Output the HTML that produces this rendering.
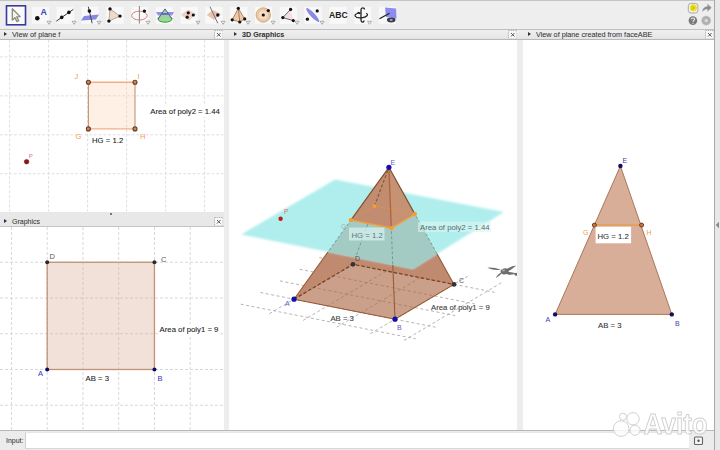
<!DOCTYPE html>
<html><head><meta charset="utf-8">
<style>
*{margin:0;padding:0;box-sizing:border-box}
html,body{width:720px;height:450px;overflow:hidden;background:#ececec;font-family:"Liberation Sans",sans-serif}
.abs{position:absolute}
#tb{left:0;top:0;width:720px;height:29px;background:#eeeeee;border-top:1px solid #c4c4c4}
.hdr{position:absolute;height:11px;background:linear-gradient(#f2f2f2,#e2e2e2);border-top:1px solid #c2c2c2;border-bottom:1px solid #b8b8b8;font-size:7.4px;color:#333}
.hdr .t{position:absolute;top:0px;line-height:9px;-webkit-text-stroke:0.05px #333}
.hdr .tri{position:absolute;top:2px;width:0;height:0;border-left:3px solid #333;border-top:2.5px solid transparent;border-bottom:2.5px solid transparent}
.cls{position:absolute;top:0px;width:9px;height:9px;border:1px solid #b8b8b8;background:#f8f8f8;font-size:8px;line-height:7px;text-align:center;color:#444}
.pane{position:absolute;background:#fff;overflow:hidden}
</style></head><body>
<div id="tb" class="abs"></div>
<svg class="abs" style="left:0;top:0" width="720" height="29" viewBox="0 0 720 29"><rect x="7.14" y="6.8" width="17.2" height="17" fill="#f8f8f8"/><rect x="31.92" y="6.8" width="17.2" height="17" fill="#f8f8f8"/><rect x="56.70" y="6.8" width="17.2" height="17" fill="#f8f8f8"/><rect x="81.48" y="6.8" width="17.2" height="17" fill="#f8f8f8"/><rect x="106.26" y="6.8" width="17.2" height="17" fill="#f8f8f8"/><rect x="131.04" y="6.8" width="17.2" height="17" fill="#f8f8f8"/><rect x="155.82" y="6.8" width="17.2" height="17" fill="#f8f8f8"/><rect x="180.60" y="6.8" width="17.2" height="17" fill="#f8f8f8"/><rect x="205.38" y="6.8" width="17.2" height="17" fill="#f8f8f8"/><rect x="230.16" y="6.8" width="17.2" height="17" fill="#f8f8f8"/><rect x="254.94" y="6.8" width="17.2" height="17" fill="#f8f8f8"/><rect x="279.72" y="6.8" width="17.2" height="17" fill="#f8f8f8"/><rect x="304.50" y="6.8" width="17.2" height="17" fill="#f8f8f8"/><rect x="329.28" y="6.8" width="17.2" height="17" fill="#f8f8f8"/><rect x="354.06" y="6.8" width="17.2" height="17" fill="#f8f8f8"/><rect x="378.84" y="6.8" width="17.2" height="17" fill="#f8f8f8"/><rect x="6.5" y="5.8" width="19" height="19" fill="#fbfbfb" stroke="#3a3a9a" stroke-width="1.6"/><path d="M12.3,8.8 L12.3,20.2 L14.9,17.6 L16.9,21.6 L18.7,20.7 L16.7,16.9 L20.2,16.6 Z" fill="#f4f4ee" stroke="#8c8c7c" stroke-width="1.3" stroke-linejoin="round"/><circle cx="37.3" cy="18.3" r="2.3" fill="#111"/><text x="40.4" y="15.2" font-size="8.8" font-weight="bold" fill="#4040b8">A</text><path d="M47,21.3 L51,21.3 L49,24.3 Z" fill="#fff" stroke="#999" stroke-width="0.8"/><line x1="56.4" y1="21.1" x2="73.3" y2="9.4" stroke="#333" stroke-width="1"/><circle cx="61.7" cy="17.4" r="1.8" fill="#111"/><circle cx="68.9" cy="12.4" r="1.8" fill="#111"/><path d="M72,21.3 L76,21.3 L74,24.3 Z" fill="#fff" stroke="#999" stroke-width="0.8"/><path d="M81,20.5 L84,16 L99,14.5 L96,19.5 Z" fill="#8888e0"/><line x1="88.3" y1="6.7" x2="92.2" y2="23.3" stroke="#444" stroke-width="1"/><circle cx="89.4" cy="11.1" r="1.8" fill="#111"/><path d="M97,21.3 L101,21.3 L99,24.3 Z" fill="#fff" stroke="#999" stroke-width="0.8"/><path d="M110,8.9 L120,16.1 L108.9,21.1 Z" fill="#f2d8c6" stroke="#999" stroke-width="0.8"/><circle cx="110" cy="8.9" r="1.7" fill="#111"/><circle cx="120" cy="16.1" r="1.7" fill="#111"/><circle cx="108.9" cy="21.1" r="1.7" fill="#111"/><line x1="139.4" y1="6" x2="139.4" y2="23.5" stroke="#777" stroke-width="0.9"/><ellipse cx="139.4" cy="15.6" rx="7.8" ry="4.4" fill="none" stroke="#d88080" stroke-width="1"/><circle cx="144.4" cy="11.1" r="1.7" fill="#111"/><path d="M146,21.3 L150,21.3 L148,24.3 Z" fill="#fff" stroke="#999" stroke-width="0.8"/><path d="M156,12 L174,12 L172,15.5 L158,15.5 Z" fill="#8888dd" opacity="0.9"/><ellipse cx="165" cy="19" rx="7" ry="3.2" fill="#90e090" stroke="#3a9a3a" stroke-width="1"/><path d="M158,19 L165,8.9 L172,19" fill="#a0d0a0" stroke="#3a3a9a" stroke-width="0.8"/><path d="M161.5,14 L168.5,14" stroke="#5555cc" stroke-width="1.5"/><path d="M181,15 L188,9.6 L196,14 L189,20.5 Z" fill="#ecd0c4"/><circle cx="188.3" cy="12.8" r="1.6" fill="#111"/><circle cx="193.3" cy="15" r="1.6" fill="#111"/><circle cx="187.2" cy="17.2" r="1.6" fill="#111"/><path d="M196,21.3 L200,21.3 L198,24.3 Z" fill="#fff" stroke="#999" stroke-width="0.8"/><path d="M206.7,15 L213,10 L221,14 L214,20 Z" fill="#e8c4b0"/><line x1="210" y1="6.7" x2="217.8" y2="23.3" stroke="#666" stroke-width="0.9"/><circle cx="217.8" cy="15" r="1.7" fill="#111"/><path d="M221,21.3 L225,21.3 L223,24.3 Z" fill="#fff" stroke="#999" stroke-width="0.8"/><path d="M238.3,8.3 L232.2,19.8 L239.8,22 L244.7,18.9 Z" fill="#f0c8a8" stroke="#8a6040" stroke-width="0.7"/><line x1="238.3" y1="8.3" x2="239.8" y2="22" stroke="#8a6040" stroke-width="0.7"/><circle cx="238.3" cy="8.3" r="1.6" fill="#111"/><circle cx="232.2" cy="19.8" r="1.6" fill="#111"/><circle cx="239.8" cy="22" r="1.6" fill="#111"/><circle cx="244.7" cy="18.9" r="1.6" fill="#111"/><path d="M246,21.3 L250,21.3 L248,24.3 Z" fill="#fff" stroke="#999" stroke-width="0.8"/><circle cx="263.3" cy="15" r="7.2" fill="#ecc8a0" stroke="#c8a070" stroke-width="0.8"/><circle cx="263.3" cy="15" r="4.5" fill="#f4dcc8"/><circle cx="263.3" cy="15" r="1.6" fill="#111"/><circle cx="268.3" cy="10.6" r="1.6" fill="#111"/><path d="M271,21.3 L275,21.3 L273,24.3 Z" fill="#fff" stroke="#999" stroke-width="0.8"/><path d="M290.6,9.4 L282.8,17.6 L293.3,20.6" fill="#f8e0e0" stroke="#444" stroke-width="0.8"/><circle cx="290.6" cy="9.4" r="1.6" fill="#111"/><circle cx="282.8" cy="17.6" r="1.6" fill="#111"/><circle cx="293.3" cy="20.6" r="1.6" fill="#111"/><path d="M295,21.3 L299,21.3 L297,24.3 Z" fill="#fff" stroke="#999" stroke-width="0.8"/><ellipse cx="312.7" cy="15" rx="9.3" ry="2.2" transform="rotate(47 312.7 15)" fill="#8a8ae4"/><circle cx="317.2" cy="10.9" r="1.6" fill="#111"/><circle cx="307.4" cy="19.2" r="1.6" fill="#111"/><path d="M320,21.3 L324,21.3 L322,24.3 Z" fill="#fff" stroke="#999" stroke-width="0.8"/><text x="329" y="18.3" font-size="8.6" font-weight="bold" fill="#222">ABC</text><path d="M364.5,9.5 C364.5,7.2 361,7.2 361,9.8 L361,20 C361,22.8 364,22.5 364,20.5" fill="none" stroke="#222" stroke-width="1.3"/><path d="M359,13 C352,14.5 355,18.5 361.5,17.8 C367,17.2 369,14.5 366.2,13.2" fill="none" stroke="#222" stroke-width="1.2"/><path d="M357.5,12.6 L360.5,13.4" stroke="#222" stroke-width="1.8"/><path d="M367.5,21.3 L371.5,21.3 L369.5,24.3 Z" fill="#fff" stroke="#999" stroke-width="0.8"/><path d="M385,7.6 L396,8.5 L396.5,18.5 L386,17 Z" fill="#8c8cf0"/><line x1="379.5" y1="18.8" x2="389.5" y2="13.3" stroke="#222" stroke-width="1.3"/><ellipse cx="391.2" cy="20" rx="4.3" ry="2.4" fill="#3a3a4a"/><ellipse cx="391.2" cy="20" rx="1.6" ry="1" fill="#aaa"/><rect x="688.3" y="3.4" width="9.6" height="9.6" rx="2.5" fill="#f2f2ea" stroke="#a4a4a0" stroke-width="0.9"/><circle cx="693.4" cy="7.8" r="3.5" fill="#ece020"/><path d="M691.5,6.5 L694.8,7.8 L691.5,9.3" fill="none" stroke="#c4b400" stroke-width="0.9"/>
<path d="M702.5,11.5 C702.5,8 705,6.6 707.5,6.6 L707.5,4 L711.5,7.8 L707.5,11.5 L707.5,9 C705.5,9 704,10 702.5,11.5 Z" fill="#8a8a8a" stroke="#bbb" stroke-width="0.5"/>
<circle cx="692.9" cy="20.6" r="4.3" fill="#7a7a7a"/><path d="M691.3,19.3 C691.3,17.6 694.6,17.6 694.6,19.3 C694.6,20.5 693,20.6 693,21.8" fill="none" stroke="#eee" stroke-width="1.1"/><circle cx="693" cy="23.3" r="0.6" fill="#eee"/>
<circle cx="706.2" cy="20.6" r="4.6" fill="#b0b0b0" stroke="#c8c8c8" stroke-width="1" stroke-dasharray="1.2,1"/><circle cx="706.2" cy="20.6" r="1.7" fill="#dcdcdc"/>
</svg>
<div class="abs" style="left:0;top:29px;width:713.5px;height:11px;background:linear-gradient(#f0f0f0,#e4e4e4);border-top:1px solid #c0c0c0;border-bottom:1px solid #b8b8b8"></div>
<div class="abs" style="left:223.5px;top:40px;width:5.5px;height:389.7px;background:#ededed"></div>
<div class="abs" style="left:517px;top:40px;width:6px;height:389.7px;background:#ededed"></div>
<div class="abs" style="left:713.5px;top:0px;width:6.5px;height:450px;background:#e8e8e8;border-left:1px solid #a8a8a8"></div>

<div class="hdr" style="left:0px;top:29px;width:223.5px;background:none;border-bottom-color:transparent;border-top-color:transparent"><div class="tri" style="left:4px"></div><div class="t" style="left:12px;font-size:7.4px;">View of plane f</div><svg class="abs" style="left:213.5px;top:0px" width="9.5" height="9.5"><rect x="0.5" y="0.5" width="8.5" height="8.5" fill="#f8f8f8" stroke="#b8b8b8" stroke-dasharray="1.5,0.7"/><path d="M3,3 L6.5,6.5 M6.5,3 L3,6.5" stroke="#555" stroke-width="1"/></svg></div>
<div class="pane" style="left:0;top:40px;width:223.5px;height:171.5px"></div>
<div class="abs" style="left:0;top:211.5px;width:223.5px;height:15.5px;background:#e8e8e8;border-bottom:1.5px solid #c4c4c4"></div>
<div class="abs" style="left:110px;top:213px;width:2px;height:2px;background:#777"></div>
<div class="hdr" style="left:0px;top:215.5px;width:223.5px;background:none;border-bottom-color:transparent;border-top-color:transparent"><div class="tri" style="left:4px"></div><div class="t" style="left:12px;font-size:7.0px;">Graphics</div><svg class="abs" style="left:213.5px;top:0px" width="9.5" height="9.5"><rect x="0.5" y="0.5" width="8.5" height="8.5" fill="#f8f8f8" stroke="#b8b8b8" stroke-dasharray="1.5,0.7"/><path d="M3,3 L6.5,6.5 M6.5,3 L3,6.5" stroke="#555" stroke-width="1"/></svg></div>
<div class="pane" style="left:0;top:227px;width:223.5px;height:202.7px"></div>
<div class="hdr" style="left:229px;top:29px;width:288px;background:none;border-bottom-color:transparent;border-top-color:transparent"><div class="tri" style="left:5px"></div><div class="t" style="left:13px;font-size:7.2px;font-weight:bold;">3D Graphics</div><svg class="abs" style="left:278.5px;top:0px" width="9.5" height="9.5"><rect x="0.5" y="0.5" width="8.5" height="8.5" fill="#f8f8f8" stroke="#b8b8b8" stroke-dasharray="1.5,0.7"/><path d="M3,3 L6.5,6.5 M6.5,3 L3,6.5" stroke="#555" stroke-width="1"/></svg></div>
<div class="pane" style="left:229px;top:40px;width:288px;height:389.7px"></div>
<div class="hdr" style="left:523px;top:29px;width:190.5px;background:none;border-bottom-color:transparent;border-top-color:transparent"><div class="tri" style="left:5px"></div><div class="t" style="left:13px;font-size:7.25px;">View of plane created from faceABE</div><svg class="abs" style="left:181.70000000000005px;top:0px" width="9.5" height="9.5"><rect x="0.5" y="0.5" width="8.5" height="8.5" fill="#f8f8f8" stroke="#b8b8b8" stroke-dasharray="1.5,0.7"/><path d="M3,3 L6.5,6.5 M6.5,3 L3,6.5" stroke="#555" stroke-width="1"/></svg></div>
<div class="pane" style="left:523px;top:40px;width:190.5px;height:389.7px"></div>

<svg class="abs" style="left:0;top:0" width="720" height="450" viewBox="0 0 720 450">
<defs>
<clipPath id="c1"><rect x="0" y="40" width="223.5" height="171.5"/></clipPath>
<clipPath id="c2"><rect x="0" y="227" width="223.5" height="202.7"/></clipPath>
<clipPath id="c3"><rect x="229" y="40" width="288" height="389.7"/></clipPath>
<clipPath id="c4"><rect x="523" y="40" width="190.5" height="389.7"/></clipPath>
<clipPath id="pl"><polygon points="241.0,234.5 335.0,179.6 504.0,212.0 413.0,269.0"/></clipPath>
<clipPath id="nopl"><path clip-rule="evenodd" d="M0,0 H720 V450 H0 Z M241,234.5 L335,179.6 L504,212 L413,269 Z"/></clipPath>
<filter id="soft" x="-5%" y="-5%" width="110%" height="110%"><feGaussianBlur stdDeviation="1.1"/></filter>
<filter id="soft2" x="-5%" y="-5%" width="110%" height="110%"><feGaussianBlur stdDeviation="0.5"/></filter>
<clipPath id="basecl"><polygon points="294.0,299.2 395.0,319.2 454.0,284.4 353.0,264.3"/></clipPath>
</defs>
<g clip-path="url(#c1)">
<g stroke="#dedede" stroke-width="1" stroke-dasharray="2.8,1.9"><line x1="9.60" y1="40" x2="9.60" y2="212"/><line x1="48.60" y1="40" x2="48.60" y2="212"/><line x1="87.60" y1="40" x2="87.60" y2="212"/><line x1="126.60" y1="40" x2="126.60" y2="212"/><line x1="165.60" y1="40" x2="165.60" y2="212"/><line x1="204.60" y1="40" x2="204.60" y2="212"/><line x1="0" y1="56.90" x2="224" y2="56.90"/><line x1="0" y1="95.85" x2="224" y2="95.85"/><line x1="0" y1="134.80" x2="224" y2="134.80"/><line x1="0" y1="173.75" x2="224" y2="173.75"/><line x1="0" y1="212.70" x2="224" y2="212.70"/></g>
<rect x="88.4" y="82.3" width="46.6" height="46.6" fill="#fbd4b4" fill-opacity="0.35"/><g stroke-width="1.4"><line x1="88.4" y1="82.3" x2="135" y2="82.3" stroke="#f6ac88"/><line x1="88.4" y1="128.9" x2="135" y2="128.9" stroke="#f6ac88"/></g><g stroke-width="1.1" stroke="#c09478"><line x1="88.4" y1="82.3" x2="88.4" y2="128.9"/><line x1="135" y1="82.3" x2="135" y2="128.9"/></g>
<g fill="#c88a60" stroke="#6a3a1a" stroke-width="1.1">
<circle cx="88.4" cy="82.3" r="2"/><circle cx="135" cy="82.3" r="2"/><circle cx="88.4" cy="128.9" r="2"/><circle cx="135" cy="128.9" r="2"/>
</g>
<circle cx="26.6" cy="161.7" r="2.3" fill="#8a1818" stroke="#5a0a0a" stroke-width="0.5"/>
<g font-size="7.5" fill="#f0a050"><text x="74.5" y="79">J</text><text x="137.5" y="79">I</text><text x="75.5" y="138.5">G</text><text x="140" y="138.5">H</text></g>
<text x="28.8" y="157.8" font-size="6" fill="#d87080">P</text>
<rect x="149" y="105.5" width="72" height="11.5" fill="#fff"/><g font-size="7.75" fill="#222" stroke="#222" stroke-width="0.08"><text x="150.3" y="114">Area of poly2 = 1.44</text><text x="92" y="143">HG = 1.2</text></g>
</g>
<g clip-path="url(#c2)">
<g stroke="#d8d8d8" stroke-width="1" stroke-dasharray="3,2"><line x1="11.45" y1="227" x2="11.45" y2="431"/><line x1="47.20" y1="227" x2="47.20" y2="431"/><line x1="82.95" y1="227" x2="82.95" y2="431"/><line x1="118.70" y1="227" x2="118.70" y2="431"/><line x1="154.45" y1="227" x2="154.45" y2="431"/><line x1="190.20" y1="227" x2="190.20" y2="431"/><line x1="0" y1="226.50" x2="224" y2="226.50"/><line x1="0" y1="262.25" x2="224" y2="262.25"/><line x1="0" y1="298.00" x2="224" y2="298.00"/><line x1="0" y1="333.75" x2="224" y2="333.75"/><line x1="0" y1="369.50" x2="224" y2="369.50"/><line x1="0" y1="405.25" x2="224" y2="405.25"/></g>
<rect x="47.2" y="262.25" width="107.25" height="107.25" fill="#d8a890" fill-opacity="0.34" stroke="#c09276" stroke-width="1.3"/>
<g fill="#2a2a2a"><circle cx="47.2" cy="262.25" r="2"/><circle cx="154.45" cy="262.25" r="2"/></g>
<g fill="#0a0a6e"><circle cx="47.2" cy="369.5" r="2"/><circle cx="154.45" cy="369.5" r="2"/></g>
<g font-size="7.5" fill="#555"><text x="49.5" y="259">D</text><text x="161" y="261.5">C</text></g>
<g font-size="7.5" fill="#3030c0"><text x="38" y="376">A</text><text x="157.5" y="381">B</text></g>
<rect x="158.5" y="324" width="61" height="12" fill="#fff"/><g font-size="7.75" fill="#222" stroke="#222" stroke-width="0.08"><text x="159.6" y="332.2">Area of poly1 = 9</text><text x="85.6" y="381">AB = 3</text></g>
</g>
<g clip-path="url(#c3)">
<g stroke="#b4b4b4" stroke-width="1" stroke-dasharray="3,2.5"><line x1="240.7" y1="304.2" x2="415.7" y2="338.8"/><line x1="260.3" y1="292.5" x2="435.4" y2="327.2"/><line x1="280.0" y1="280.9" x2="455.1" y2="315.6"/><line x1="299.7" y1="269.3" x2="474.7" y2="303.9"/><line x1="319.3" y1="257.6" x2="494.4" y2="292.3"/><line x1="269.4" y1="313.7" x2="366.8" y2="256.2"/><line x1="303.1" y1="320.4" x2="400.4" y2="262.8"/><line x1="336.8" y1="327.1" x2="434.1" y2="269.5"/><line x1="370.4" y1="333.7" x2="467.8" y2="276.2"/><line x1="404.1" y1="340.4" x2="501.4" y2="282.8"/></g>
<polygon points="294.0,299.2 395.0,319.2 454.0,284.4 388.9,167.3" fill="#c08a70"/>
<polygon points="294.0,299.2 395.0,319.2 454.0,284.4 353.0,264.3" fill="#caa08a"/>
<g clip-path="url(#basecl)" stroke="#9a6a52" stroke-opacity="0.55" stroke-width="1" stroke-dasharray="3,2.5"><line x1="240.7" y1="304.2" x2="415.7" y2="338.8"/><line x1="260.3" y1="292.5" x2="435.4" y2="327.2"/><line x1="280.0" y1="280.9" x2="455.1" y2="315.6"/><line x1="299.7" y1="269.3" x2="474.7" y2="303.9"/><line x1="319.3" y1="257.6" x2="494.4" y2="292.3"/><line x1="269.4" y1="313.7" x2="366.8" y2="256.2"/><line x1="303.1" y1="320.4" x2="400.4" y2="262.8"/><line x1="336.8" y1="327.1" x2="434.1" y2="269.5"/><line x1="370.4" y1="333.7" x2="467.8" y2="276.2"/><line x1="404.1" y1="340.4" x2="501.4" y2="282.8"/></g>
<polygon points="241.0,234.5 335.0,179.6 504.0,212.0 413.0,269.0" fill="#b0eeee" filter="url(#soft)"/>
<polygon points="294.0,299.2 395.0,319.2 454.0,284.4 388.9,167.3" fill="#a4cbc3" clip-path="url(#pl)"/>
<g clip-path="url(#pl)" stroke="#6f9c96" stroke-width="1" fill="none" stroke-dasharray="3,2"><line x1="294.0" y1="299.2" x2="350.9" y2="220.1"/><line x1="395.0" y1="319.2" x2="391.3" y2="228.1"/><line x1="454.0" y1="284.4" x2="414.9" y2="214.1"/><line x1="353.0" y1="264.3" x2="374.5" y2="206.1"/></g>
<polygon points="350.9,220.1 391.3,228.1 414.9,214.1 388.9,167.3" fill="#c28c70"/>
<polygon points="391.3,228.1 414.9,214.1 388.9,167.3" fill="#c69274"/>
<g clip-path="url(#nopl)" stroke="#9a5a36" stroke-width="1.1" fill="none">
<polyline points="294.0,299.2 395.0,319.2 454.0,284.4"/><line x1="294.0" y1="299.2" x2="350.9" y2="220.1"/><line x1="395.0" y1="319.2" x2="391.3" y2="228.1"/><line x1="454.0" y1="284.4" x2="414.9" y2="214.1"/>
</g>
<g stroke="#7e5232" stroke-width="1.2" fill="none"><polyline points="350.9,220.1 388.9,167.3 414.9,214.1"/></g><g stroke="#b0643a" stroke-width="1.3" fill="none"><line x1="391.3" y1="228.1" x2="388.9" y2="167.3"/></g>
<g clip-path="url(#nopl)" stroke="#7a4424" stroke-width="1.3" fill="none" stroke-dasharray="3.5,2">
<polyline points="294.0,299.2 353.0,264.3 454.0,284.4"/>
</g>
<g stroke="#8a5030" stroke-width="1.1" fill="none" stroke-dasharray="3,2"><line x1="374.5" y1="206.1" x2="388.9" y2="167.3"/></g>
<g stroke="#f0a040" stroke-width="1.5" fill="none"><polyline points="350.9,220.1 391.3,228.1 414.9,214.1"/></g>
<g stroke="#e8963a" stroke-width="1" fill="none" stroke-dasharray="3,2" opacity="0.7"><polyline points="414.9,214.1 374.5,206.1 350.9,220.1"/></g>
<g fill="#f0a030"><circle cx="350.9" cy="220.1" r="2.2"/><circle cx="391.3" cy="228.1" r="2.2"/><circle cx="414.9" cy="214.1" r="2.2"/><circle cx="374.5" cy="206.1" r="2"/></g>
<g fill="#1010b0"><circle cx="294.0" cy="299.2" r="2.6"/><circle cx="395.0" cy="319.2" r="2.6"/><circle cx="388.9" cy="167.3" r="2.6"/></g>
<g fill="#333"><circle cx="454.0" cy="284.4" r="2.4"/><circle cx="353.0" cy="264.3" r="2.4"/></g>
<circle cx="280.6" cy="218.7" r="2.2" fill="#c01818"/>
<g font-size="7" fill="#6060c0"><text x="390.5" y="164.5">E</text><text x="285" y="306">A</text><text x="397" y="330">B</text></g>
<g font-size="7" fill="#555"><text x="459" y="283">C</text><text x="355" y="261">D</text><text x="341" y="229" fill="#aaa" font-size="6.5">G</text></g>
<text x="284" y="214" font-size="6.5" fill="#e07070">P</text>
<rect x="349" y="227.5" width="35.5" height="13" fill="#d6f0ee" opacity="0.75"/><rect x="418" y="221.5" width="73" height="10.5" fill="#d8f6f4" opacity="0.6"/>
<g font-size="7.75"><text x="351.5" y="237.5" fill="#5f747a">HG = 1.2</text><text x="420" y="230" fill="#5a6a6c">Area of poly2 = 1.44</text></g><g font-size="7.75" fill="#444" stroke="#444" stroke-width="0.12"><text x="330.4" y="320.6">AB = 3</text><text x="431" y="310">Area of poly1 = 9</text></g>
</g>
<g clip-path="url(#c4)">
<polygon points="555.1,314.4 671.8,314.4 620.4,166" fill="#d8ae98" stroke="#a87858" stroke-width="1"/>
<line x1="594.4" y1="225.1" x2="641.6" y2="225.1" stroke="#e89a50" stroke-width="1.5"/>
<g fill="#c87840" stroke="#6a3818" stroke-width="1"><circle cx="594.4" cy="225.1" r="2"/><circle cx="641.6" cy="225.1" r="2"/></g>
<g fill="#101060"><circle cx="555.1" cy="314.4" r="2.2"/><circle cx="671.8" cy="314.4" r="2.2"/><circle cx="620.4" cy="166" r="2.2"/></g>
<g font-size="7" fill="#4040b0"><text x="545.5" y="322">A</text><text x="675" y="326">B</text><text x="622.5" y="163">E</text></g>
<g font-size="7" fill="#f0a050"><text x="583" y="235">G</text><text x="646.5" y="235">H</text></g>
<rect x="595.6" y="226.7" width="35.5" height="16.6" fill="#fff"/>
<g font-size="7.75" fill="#333" stroke="#333" stroke-width="0.08"><text x="597.5" y="239">HG = 1.2</text><text x="598" y="327.8">AB = 3</text></g>
</g>
<g clip-path="url(#c3)"><g fill="#6e6e6e">
<path d="M487.3,267.7 Q494,267.2 501,269.8 Q494,271 487.3,267.7 Z"/>
<path d="M495.5,278.2 Q498,273.5 503,271.5 Q500.5,276 495.5,278.2 Z"/>
<ellipse cx="504.5" cy="271.3" rx="4" ry="3" transform="rotate(-15 504.5 271.3)"/>
<path d="M505,270 Q511,266 516.3,265.6 Q512,269.5 506,272.5 Z"/>
<path d="M506,271.5 Q512,272.2 516.5,273.6 Q511,275.5 506,274 Z"/>
<circle cx="516" cy="274.2" r="1.5"/>
<ellipse cx="503.5" cy="270.5" rx="1.6" ry="1" fill="#a8a8a8"/>
</g></g>
</svg>

<div class="abs" style="left:0;top:429.7px;width:713.5px;height:20.30000000000001px;background:#ececec;border-top:1px solid #b8b8b8"></div>
<div class="abs" style="left:6px;top:437px;font-size:7px;line-height:8px;color:#2a2a2a">Input:</div>
<div class="abs" style="left:25px;top:432px;width:663.5px;height:16.5px;background:#fff;border-left:1px solid #d0d0d0;border-top:1px solid #e6e6e6;border-bottom:1px solid #d8d8d8"></div>
<svg class="abs" style="left:0;top:0" width="720" height="450" viewBox="0 0 720 450">
<rect x="694.5" y="437" width="8" height="7.5" rx="1" fill="#f4f4f4" stroke="#666" stroke-width="1.1"/><circle cx="698.5" cy="440.7" r="1.2" fill="#555"/>
<path d="M719,221.7 L715.7,225 L719,228.3 Z" fill="#888"/>
<g fill="#ffffff" fill-opacity="0.8" stroke="#d0d0d0" stroke-width="1" filter="url(#soft2)">
<circle cx="621.2" cy="428.6" r="7.8"/><circle cx="623" cy="416.7" r="3.6"/><circle cx="633" cy="418.8" r="6.2"/><circle cx="635" cy="430.2" r="5.1"/>
<text x="643.6" y="434" font-size="29" font-weight="bold" textLength="64.2" lengthAdjust="spacingAndGlyphs">Avito</text>
</g>
</svg>
</body></html>
